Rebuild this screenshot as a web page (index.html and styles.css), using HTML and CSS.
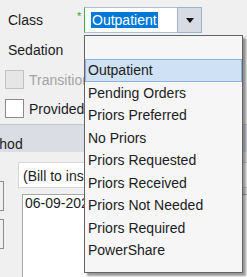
FILE: index.html
```html
<html>
    <head>
        <link rel="stylesheet" href="styles.css">
    </head>
    <body>
      <div class="page">
        <div class="row first">
            <span class="label">Class</span>
            <span class="req">*</span>
            <div class="combo">
                <div class="combo-text"><span class="sel">Outpatient</span></div>
                <div class="combo-btn"><span class="arrow"></span></div>
            </div>
        </div>
        <div class="row second">
            <span class="label">Sedation</span>
        </div>
        <div class="check-row disabled">
            <span class="box"></span>
            <span class="check-text">Transition</span>
        </div>
        <div class="check-row provided">
            <span class="box"></span>
            <span class="check-text">Provided</span>
        </div>

        <div class="section-head"><span class="head-text">Method</span></div>

        <div class="lower">
            <div class="btns">
                <div class="btn"></div>
                <div class="btn"></div>
            </div>
            <div class="fields">
                <div class="input">(Bill to insurance)</div>
                <div class="textarea">06-09-2023</div>
            </div>
        </div>

        <ul class="dropdown">
            <li class="empty"></li>
            <li class="hover">Outpatient</li>
            <li>Pending Orders</li>
            <li>Priors Preferred</li>
            <li>No Priors</li>
            <li>Priors Requested</li>
            <li>Priors Received</li>
            <li>Priors Not Needed</li>
            <li>Priors Required</li>
            <li>PowerShare</li>
        </ul>
      </div>
    </body>
</html>
```

FILE: styles.css
```css
body{
    margin:0;
    background-color:#f0f0f0;
    font-family:"Liberation Sans", Arial, sans-serif;
    font-size:14px;
    color:#1c1c24;
    overflow:hidden;
}
.page{
    position:relative;
    width:247px;
    height:277px;
    overflow:hidden;
    padding-top:7px;
    box-sizing:border-box;
}
.row{
    display:flex;
    align-items:center;
    height:26px;
}
.second{
    margin-top:4px;
}
.label{
    width:69px;
    padding-left:8px;
}
.req{
    align-self:flex-start;
    width:7px;
    margin-top:4px;
    font-size:11px;
    line-height:11px;
    color:#3d9e3d;
}
.combo{
    display:flex;
    width:118px;
    height:26px;
    box-sizing:border-box;
    border:1px solid #b3bfd0;
    border-left:1px solid #3fb04a;
    background-color:white;
}
.combo-text{
    flex:1;
    display:flex;
    align-items:center;
    padding-left:6px;
}
.sel{
    background-color:#0078d7;
    color:white;
    line-height:16px;
    padding:0 1px;
}
.combo-btn{
    width:23px;
    margin:-1px -1px -1px 0;
    border:1px solid #9db2cb;
    background-color:#d6dbe4;
    display:flex;
    align-items:center;
    justify-content:center;
}
.arrow{
    width:0;
    height:0;
    border-left:4px solid transparent;
    border-right:4px solid transparent;
    border-top:5px solid #111;
}
.check-row{
    display:flex;
    align-items:center;
    height:19px;
    padding-left:5px;
}
.disabled{
    margin-top:7px;
}
.provided{
    margin-top:10px;
}
.box{
    width:19px;
    height:19px;
    box-sizing:border-box;
    border:1px solid #8a8a8a;
    background-color:white;
}
.disabled .box{
    border-color:#c2c2c2;
    background-color:#e6e6e6;
}
.check-text{
    margin-left:5px;
}
.disabled .check-text{
    color:#a3a3a3;
}
.section-head{
    margin-top:6px;
    height:28px;
    box-sizing:border-box;
    border-top:1px solid #c8c8c8;
    background-color:#dadde4;
    padding-top:11px;
    line-height:16px;
    overflow:hidden;
    white-space:nowrap;
}
.head-text{
    display:inline-block;
    margin-left:-24px;
}
.lower{
    display:flex;
}
.btns{
    width:4px;
    padding-top:29px;
}
.btn{
    margin-left:-16px;
    width:20px;
    height:30px;
    box-sizing:border-box;
    border:1px solid #8e8e8e;
    margin-bottom:8px;
}
.fields{
    padding-left:14px;
    padding-top:10px;
}
.input{
    width:300px;
    height:26px;
    box-sizing:border-box;
    border:1px solid #d6d6d6;
    background-color:white;
    padding:5px 0 0 4px;
    line-height:16px;
    white-space:nowrap;
}
.textarea{
    width:300px;
    height:120px;
    margin-top:6px;
    margin-left:4px;
    box-sizing:border-box;
    border:1px solid #a9a9a9;
    background-color:white;
    padding:0 0 0 2px;
    line-height:16px;
}
.dropdown{
    position:absolute;
    left:84px;
    top:35px;
    width:159px;
    height:238px;
    box-sizing:border-box;
    margin:0;
    padding:0;
    list-style:none;
    border:1px solid #646464;
    background-color:#f6f6f6;
    box-shadow:3px 3px 2px rgba(0,0,0,0.4);
}
.dropdown li{
    height:22.5px;
    line-height:22.5px;
    padding-left:3px;
    box-sizing:border-box;
    white-space:nowrap;
}
.dropdown .empty{
    height:23px;
}
.dropdown .hover{
    background-color:#cfe1f5;
    outline:1px solid #8eb2dc;
    outline-offset:-1px;
}
```
